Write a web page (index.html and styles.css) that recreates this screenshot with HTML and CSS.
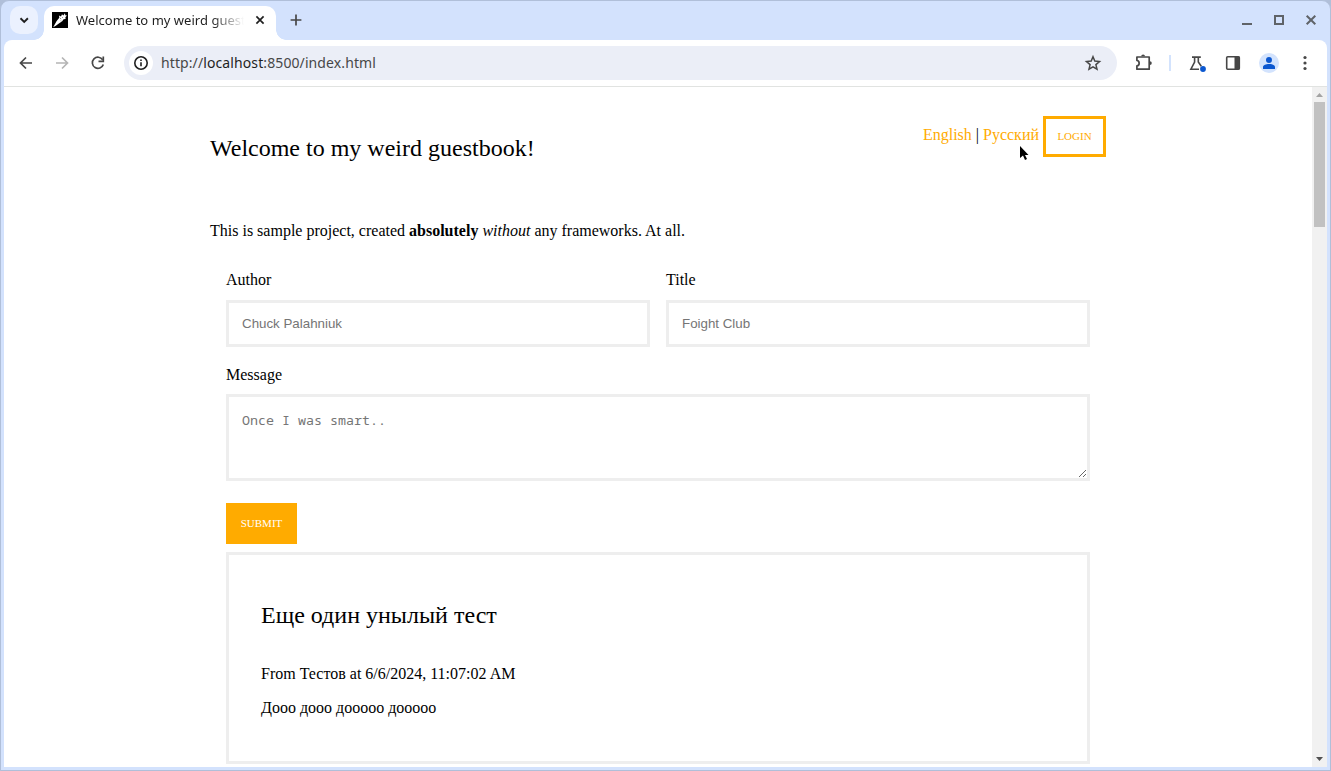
FILE: index.html
```
<!DOCTYPE html>
<html lang="en">
<head>
<meta charset="utf-8">
<title>Welcome to my weird guestbook!</title>
<link rel="stylesheet" href="styles.css">
</head>
<body>
<div class="window">
  <div class="tabstrip">
    <button class="tab-search" aria-label="Search tabs"><svg width="28" height="28" viewBox="0 0 28 28"><path d="M10.500 12.300l3.700 3.600 3.700-3.600" fill="none" stroke="#1f1f1f" stroke-width="1.900"/></svg></button>
    <div class="tab">
      <svg class="favicon" width="16" height="16" viewBox="0 0 16 16"><rect width="16" height="16"/><path d="M1.200 15.200L4.500 9.200 7.300 5.800 7 3.600 9 4.400 10 2.300 11.300 3.600 13 1.200 13.300 3.200 15 3.400 13.400 5.200 13.600 7 11.600 7.300 10.200 9.300 7.200 11.300 3.800 13.700Z" fill="#fff"/><path d="M8 6.200l1.200.8M10.200 5.200l.8.800M8.600 8.800l.8.400" stroke="#555" stroke-width=".7"/></svg>
      <span class="tab-title">Welcome to my weird guest</span>
      <svg class="tab-close" width="10" height="10" viewBox="0 0 10 10"><path d="M1.400 1.400l7.200 7.200M8.600 1.400L1.400 8.600" stroke="#1f1f1f" stroke-width="1.700"/></svg>
    </div>
    <svg class="new-tab" width="12" height="12" viewBox="0 0 12 12"><path d="M6 .6v10.800M.6 6h10.800" stroke="#474747" stroke-width="1.700"/></svg>
    <div class="controls">
      <svg width="12" height="12" viewBox="0 0 12 12"><path d="M1 10h10" stroke="#5f6368" stroke-width="2"/></svg>
      <svg width="12" height="12" viewBox="0 0 12 12"><rect x="2" y="2" width="8" height="8" fill="none" stroke="#5f6368" stroke-width="2"/></svg>
      <svg width="12" height="12" viewBox="0 0 12 12"><path d="M1.700 1.700l8.600 8.600M10.300 1.700l-8.600 8.600" stroke="#5f6368" stroke-width="2"/></svg>
    </div>
  </div>
  <div class="toolbar">
    <span class="tool"><svg width="20" height="20" viewBox="0 0 20 20"><path d="M16 10H5M10 4.500L4.500 10l5.500 5.500" fill="none" stroke="#474747" stroke-width="1.700"/></svg></span>
    <span class="tool"><svg width="20" height="20" viewBox="0 0 20 20"><path d="M4 10h11M10 4.500l5.500 5.500-5.500 5.500" fill="none" stroke="#b5b5b5" stroke-width="1.700"/></svg></span>
    <span class="tool"><svg width="20" height="20" viewBox="0 0 20 20"><path d="M14.700 6.800A5.600 5.600 0 1 0 15.300 11.500" fill="none" stroke="#474747" stroke-width="1.700"/><path d="M15.300 3.500v4.800h-4.800" fill="none" stroke="#474747" stroke-width="1.700"/></svg></span>
    <div class="address">
      <span class="site-info"><svg width="16" height="16" viewBox="0 0 16 16"><circle cx="8" cy="8" r="6.200" fill="none" stroke="#1f1f1f" stroke-width="1.600"/><path d="M8 7.200v4M8 4.400v1.600" stroke="#1f1f1f" stroke-width="1.600"/></svg></span>
      <span class="url">http://<b>localhost</b>:8500/index.html</span>
      <svg class="star" width="18" height="18" viewBox="0 0 18 18"><path d="M9 2.800l1.800 4.300 4.700.4-3.600 3.100 1.100 4.600L9 12.800l-4 2.400 1.100-4.600-3.600-3.100 4.700-.4z" fill="none" stroke="#474747" stroke-width="1.500"/></svg>
    </div>
    <span class="tool puzzle"><svg width="20" height="20" viewBox="0 0 20 20"><path d="M2.900 4H15.200V16.200H2.900V12.900C5.900 12.500 5.900 7.900 2.900 7.400Z" fill="none" stroke="#474747" stroke-width="1.700" stroke-linejoin="round"/><path d="M7.200 3.300a1.900 1.900 0 0 1 3.800 0zM15.900 8.200a1.900 1.900 0 0 1 0 3.800z" fill="#474747"/></svg></span>
    <span class="divider"></span>
    <span class="tool"><svg width="20" height="20" viewBox="0 0 20 20"><path d="M5 4.100h8.800M7.600 4v5L3.900 16.200H12M11.300 4v5l3 4.200" fill="none" stroke="#474747" stroke-width="1.600"/><circle cx="16" cy="16" r="2.900" fill="#0b57d0"/></svg></span>
    <span class="tool"><svg width="20" height="20" viewBox="0 0 20 20"><rect x="3.700" y="3.700" width="12.600" height="12.600" rx="1" fill="none" stroke="#474747" stroke-width="1.600"/><path d="M11.500 3.500h5v13h-5z" fill="#474747"/></svg></span>
    <span class="tool"><svg width="20" height="20" viewBox="0 0 20 20"><circle cx="10" cy="10" r="10" fill="#d3e3fd"/><circle cx="10" cy="7" r="3" fill="#0b57d0"/><path d="M4 16v-2c0-2 3-3 6-3s6 1 6 3v2z" fill="#0b57d0"/></svg></span>
    <span class="tool"><svg width="20" height="20" viewBox="0 0 20 20" fill="#474747"><circle cx="10" cy="4.500" r="1.600"/><circle cx="10" cy="10" r="1.600"/><circle cx="10" cy="15.500" r="1.600"/></svg></span>
  </div>
  <div class="viewport">
    <main class="page">
      <header class="header">
        <h1 class="title">Welcome to my weird guestbook!</h1>
        <nav class="nav"><span class="langs"><a class="lang">English</a> | <a class="lang">Русский</a></span><button class="btn btn-outline">LOGIN</button></nav>
      </header>
      <p class="intro">This is sample project, created <strong>absolutely</strong> <em>without</em> any frameworks. At all.</p>
      <form class="form">
        <div class="row">
          <label class="field">Author<input class="input" placeholder="Chuck Palahniuk"></label>
          <label class="field">Title<input class="input" placeholder="Foight Club"></label>
        </div>
        <label class="field message">Message<textarea class="input area" placeholder="Once I was smart.."></textarea></label>
        <button class="btn submit" type="button">SUBMIT</button>
      </form>
      <article class="card">
        <h2 class="title">Еще один унылый тест</h2>
        <p class="meta">From Тестов at 6/6/2024, 11:07:02 AM</p>
        <p class="text">Дооо дооо дооооо дооооо</p>
      </article>
    </main>
    <div class="scrollbar">
      <svg width="15" height="15" viewBox="0 0 15 15"><path d="M4 10l3.500-4L11 10z" fill="#a3a3a3"/></svg>
      <div class="thumb"></div>
      <svg class="down" width="15" height="15" viewBox="0 0 15 15"><path d="M4 5h7l-3.500 4z" fill="#505050"/></svg>
    </div>
  </div>
</div>
<svg class="cursor" width="10" height="16" viewBox="0 0 10 16"><path d="M0 0v12l3-2.500 2 4.500 2-1-2-4h3.500z"/></svg>
</body>
</html>
```
FILE: styles.css
```
* { box-sizing: border-box; }
body { margin: 0; overflow: hidden; background: #b0bfd9; }
button { border: 0; padding: 0; margin: 0; }
svg { display: block; flex: none; }
.window {
  width: 1331px; height: 771px; border: 1px solid #b0bfd9; border-radius: 9px 9px 0 0;
  background: #d3e2fd; padding: 0 3px 3px; display: flex; flex-direction: column;
}
.tabstrip { height: 39px; flex: none; display: flex; align-items: flex-start; padding: 5px 10px 0 6px; }
.tab-search { width: 28px; height: 28px; border-radius: 10px; background: #ebf1fe; }
.tab {
  position: relative; width: 232px; height: 34px; margin-left: 6px; padding: 0 11px 6px 8px;
  border-radius: 10px 10px 0 0; background: #fff; display: flex; align-items: center;
}
.tab::before, .tab::after { content: ""; position: absolute; bottom: 0; width: 10px; height: 10px; }
.tab::before { left: -10px; background: radial-gradient(circle at 0 0, transparent 9.5px, #fff 10px); }
.tab::after { right: -10px; background: radial-gradient(circle at 100% 0, transparent 9.5px, #fff 10px); }
.tab-title {
  width: 168px; margin-left: 8px; white-space: nowrap;
  font: 13px/18px "Noto Sans", sans-serif; letter-spacing: 0.02px; color: #1f1f1f;
  -webkit-mask-image: linear-gradient(90deg, #000 136px, transparent 168px);
  mask-image: linear-gradient(90deg, #000 136px, transparent 168px);
}
.tab-close { margin-left: auto; }
.new-tab { margin: 8px 0 0 14px; }
.controls { margin: 8px 0 0 auto; display: flex; gap: 20px; }
.toolbar {
  height: 47px; flex: none; padding: 0 4px; background: #fff; border-bottom: 1px solid #e1e3e1;
  border-radius: 8px 8px 0 0; display: flex; align-items: center;
}
.tool { width: 36px; height: 36px; flex: none; display: flex; align-items: center; justify-content: center; }
.address {
  width: 993px; height: 34px; margin-left: 8px; padding: 0 15px 0 5px; border-radius: 17px;
  background: #ebeef7; display: flex; align-items: center;
}
.site-info { width: 24px; height: 24px; border-radius: 50%; background: #fff; display: flex; align-items: center; justify-content: center; }
.url { margin-left: 8px; font: 14px/20px "Noto Sans", sans-serif; letter-spacing: 0.1px; color: #474747; }
.url b { font-weight: 400; color: #1f1f1f; }
.star { margin-left: auto; }
.puzzle { margin-left: 9px; }
.divider { width: 2px; height: 16px; margin: 0 8px 0 7px; background: #d3e3fd; }
.viewport { flex: 1; min-height: 0; display: flex; background: #fff; overflow: hidden; }
.page { flex: 1; padding: 29px 206px 0; font: 16px/18px "Liberation Serif", serif; color: #000; }
.header { height: 41px; display: flex; justify-content: space-between; align-items: flex-start; }
.title { margin: 0; font-size: 24px; line-height: 28px; font-weight: 400; }
.header .title { margin-top: 18px; }
.nav { display: flex; }
.langs { margin: 10px 4px 0 0; }
.lang { color: #ffab00; }
.btn { height: 41px; font: 11px/13px "Liberation Serif", serif; }
.btn-outline { width: 63px; border: 3px solid #ffab00; background: #fff; color: #ffab00; }
.intro { margin: 65px 0 0; }
.form { margin: 31px 16px 0; }
.row { display: flex; gap: 16px; }
.field { display: block; flex: 1; }
.input {
  display: block; width: 100%; height: 47px; margin-top: 11px; padding: 10px 13px;
  border: 3px solid #eee; border-radius: 0; background: #fff; font: 13.333px "Liberation Sans", sans-serif;
}
.input::placeholder { color: #757575; }
.message { margin-top: 19px; }
.area { height: 87px; margin-top: 10px; font: 13.333px/15px "Noto Sans Mono", "DejaVu Sans Mono", monospace; padding: 16px 13px; }
.submit { display: block; width: 71px; margin-top: 22px; background: #ffab00; color: #fff; }
.card { height: 212px; margin: 8px 16px 0; padding: 46px 32px 0; border: 3px solid #eee; }
.meta { margin: 36px 0 0; }
.text { margin: 16px 0 0; }
.scrollbar { width: 15px; background: #f1f1f1; display: flex; flex-direction: column; }
.thumb { width: 11px; height: 125px; margin-left: 2px; background: #c1c1c1; }
.down { margin-top: auto; }
.cursor { position: absolute; left: 1020px; top: 146px; }
```
